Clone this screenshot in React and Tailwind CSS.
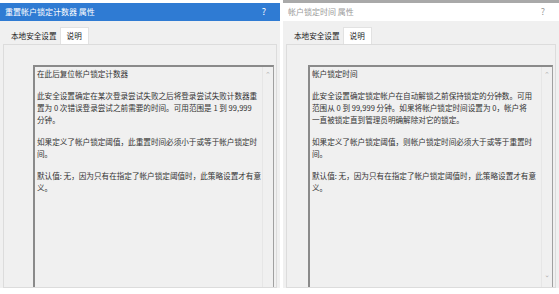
import React from 'react';

const font = { fontFamily: '"Noto Sans CJK SC", "Noto Sans", sans-serif' };

const DialogPanel = ({ title, active, paragraphs, padLeft, showDown }) => (
  <div className="flex flex-col h-full bg-[#f0f0f0]">
    {/* Title bar */}
    <div className={`h-[3px] ${active ? 'bg-white' : 'bg-[#a9a9a9]'}`} />
    <div
      className={`h-[18px] flex items-center justify-between pl-[5px] pr-[14px] text-[8px]
        ${active ? 'bg-[#2f7bd3] text-white' : 'bg-white text-[#9a9a9a]'}`}
    >
      <span>{title}</span>
      <span className="text-[9px]">?</span>
    </div>

    {/* Tabs */}
    <div className="flex items-end h-[23px] pl-[8px] text-[7.6px] text-[#222]">
      <div className="h-[16px] px-[3px] flex items-center">本地安全设置</div>
      <div className="h-[17px] px-[6px] flex items-center bg-white border border-b-0 border-[#e2e2e2]">说明</div>
    </div>

    {/* Tab page */}
    <div className={`flex-1 mx-[3px] border border-[#dcdcdc] bg-[#f0f0f0] pt-[20px] ${padLeft} pr-[2px]`}>
      <div className="h-full flex border-l-2 border-t-2 border-[#8a8a8a] border-r border-r-[#a0a0a0]">
        <div className="flex-1 pl-[2px] pt-[1px] text-[7.6px] leading-[12px] text-[#333]">
          {paragraphs.map((p, i) => (
            <div key={i} className={i > 0 ? 'mt-[10px]' : ''}>
              {p.map((line, j) => (
                <div key={j} className="whitespace-nowrap">{line}</div>
              ))}
            </div>
          ))}
        </div>
        <div className="w-[11px] flex flex-col items-center justify-between border-l border-[#e6e6e6] pt-[2px] pb-[8px] text-[7px] text-[#b5b5b5]">
          <span>⌃</span>
          {showDown && <span className="rotate-180">⌃</span>}
        </div>
      </div>
    </div>
    <div className="h-[6px] bg-white" />
  </div>
);

export default function App() {
  const left = [
    ['在此后复位帐户锁定计数器'],
    [
      '此安全设置确定在某次登录尝试失败之后将登录尝试失败计数器重',
      '置为 0 次错误登录尝试之前需要的时间。可用范围是 1 到 99,999',
      '分钟。',
    ],
    ['如果定义了帐户锁定阈值，此重置时间必须小于或等于帐户锁定时', '间。'],
    ['默认值: 无，因为只有在指定了帐户锁定阈值时，此策略设置才有意', '义。'],
  ];
  const right = [
    ['帐户锁定时间'],
    [
      '此安全设置确定锁定帐户在自动解锁之前保持锁定的分钟数。可用',
      '范围从 0 到 99,999 分钟。如果将帐户锁定时间设置为 0，帐户将',
      '一直被锁定直到管理员明确解除对它的锁定。',
    ],
    ['如果定义了帐户锁定阈值，则帐户锁定时间必须大于或等于重置时', '间。'],
    ['默认值: 无，因为只有在指定了帐户锁定阈值时，此策略设置才有意', '义。'],
  ];

  return (
    <div className="w-[559px] h-[294px] flex bg-white overflow-hidden" style={font}>
      <div className="w-[280px] h-full">
        <DialogPanel title="重置帐户锁定计数器 属性" active paragraphs={left} padLeft="pl-[29px]" />
      </div>
      <div className="w-[3px] h-full bg-white" />
      <div className="flex-1 h-full">
        <DialogPanel title="帐户锁定时间 属性" paragraphs={right} padLeft="pl-[21px]" showDown />
      </div>
    </div>
  );
}
